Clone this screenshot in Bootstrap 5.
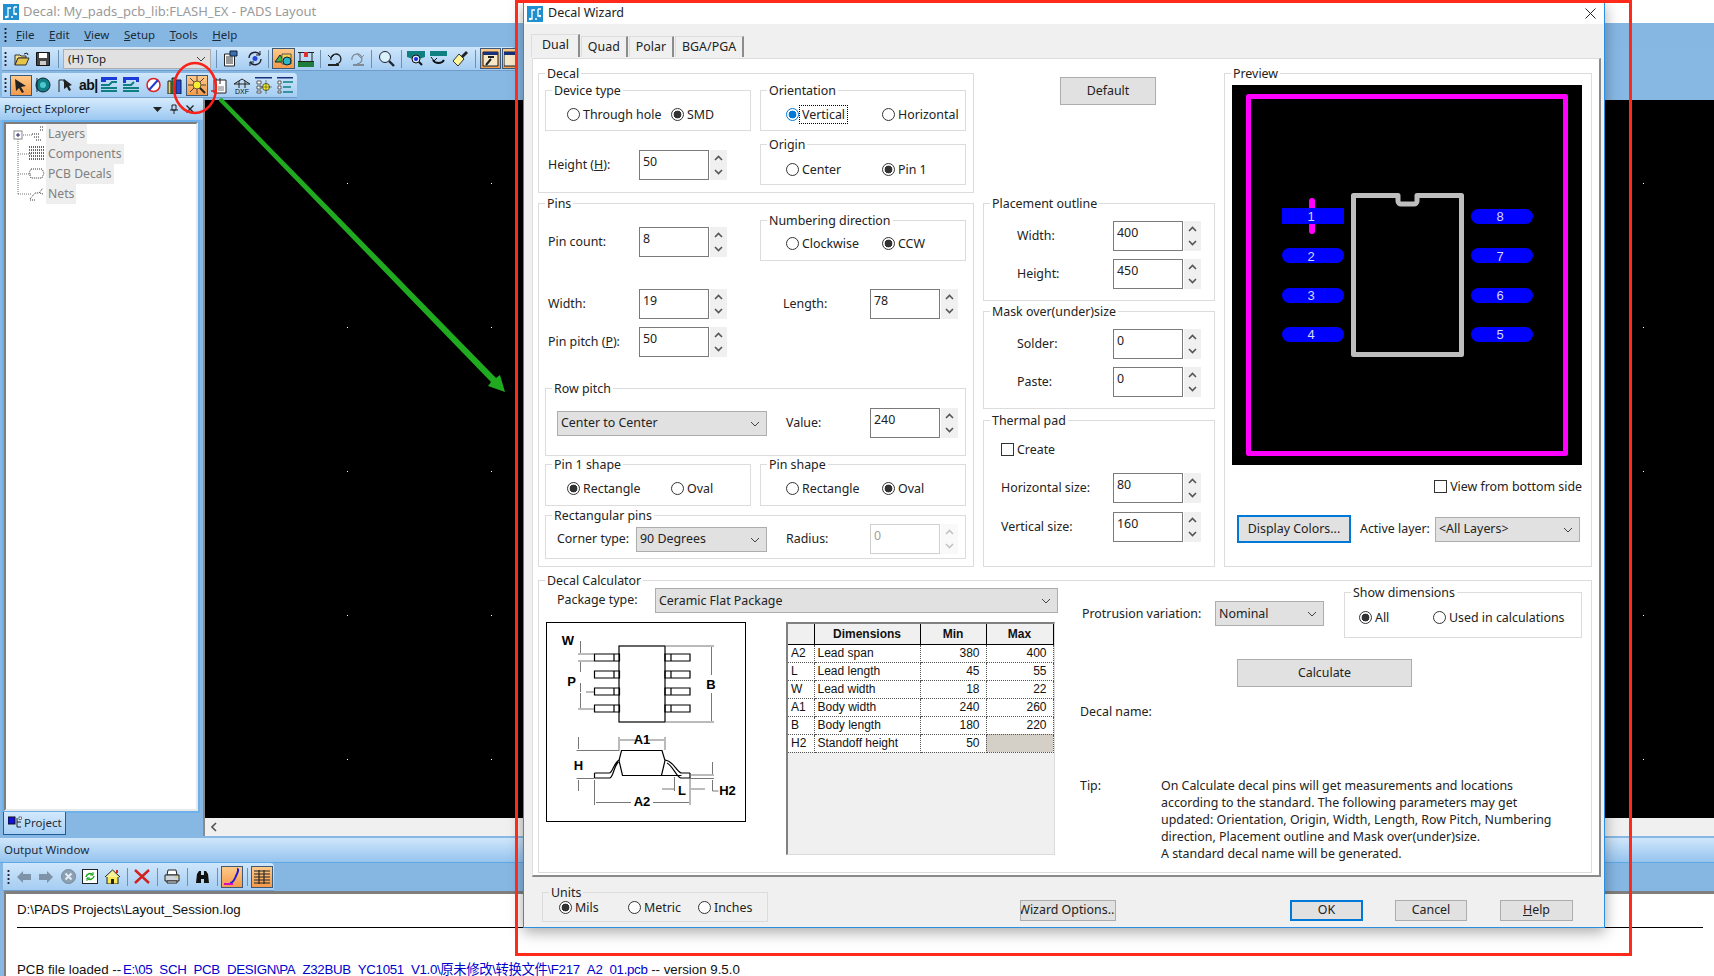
<!DOCTYPE html>
<html lang="en">
<head>
<meta charset="UTF-8">
<title>Decal Wizard - PADS Layout</title>
<link href="https://cdn.jsdelivr.net/npm/bootstrap@5.3.0/dist/css/bootstrap.min.css" rel="stylesheet">
<style>
body { margin: 0; background: #fff; }
.app { position: relative; width: 1714px; height: 976px; overflow: hidden; background: #87b8e4; font-family: "Noto Sans", sans-serif; font-size: 12.4px; color: #222; }

/* toolbar spacing, in the pixels of the original toolbars */
.gl-1 { margin-left: 1px; } .gl-2 { margin-left: 2px; } .gl-3 { margin-left: 3px; } .gl-4 { margin-left: 4px; }
.gl-5 { margin-left: 5px; } .gl-6 { margin-left: 6px; } .gl-7 { margin-left: 7px; } .gl-8 { margin-left: 8px; }

/* main window */
.win-title { height: 23px; background: #fff; color: #9a9a9a; font-size: 13px; padding-left: 3px; gap: 4px; }
.menu-strip { height: 24px; padding-left: 2px; background: #86b7e3; }
.menu-item { margin-right: 14.6px; font-size: 11.5px; color: #1a2a3a; }
.grip { width: 3px; height: 16px; margin: 0 3px 0 2px; flex: none; background-image: radial-gradient(circle, #223 0 1px, transparent 1.2px); background-size: 3px 4px; }
.strip { background: linear-gradient(#cfe6fb, #a5cdf2); border-bottom: 1px solid #6f9ccb; border-radius: 0 4px 0 0; }
.strip-top { height: 24px; margin-left: 2px; width: 513px; }
.strip-second { height: 25px; margin: 2px 0 0 2px; width: 295px; }
.ico { display: block; flex: none; }
.hot { display: flex; align-items: center; justify-content: center; flex: none; height: 21px; background: linear-gradient(#ffc98a, #f59a4a); border: 1px solid #3c5a78; }
.hot-23 { width: 23px; } .hot-22 { width: 22px; height: 22px; } .hot-21 { width: 21px; } .hot-14 { width: 14px; border-right: 0; }
.hot-arrow { width: 22px; }
.sep { width: 1px; height: 18px; background: #6f8faf; flex: none; }
.layer-pick { width: 148px; height: 20px; flex: none; background: #e1e1e1; border: 1px solid #adadad; padding: 0 4px; color: #222; font-size: 11.5px; }
.ab-mark { width: 16px; flex: none; font-family: "Liberation Sans", sans-serif; font-weight: 700; font-size: 14px; line-height: 1; letter-spacing: -.5px; white-space: nowrap; color: #111; }

.work { height: 738px; }
.side-pane { width: 203px; flex: none; }
.pane-head { height: 22px; padding: 0 9px 0 4px; background: linear-gradient(#d6ebfd, #9cc8f1); color: #1c2c3c; font-size: 11.5px; }
.tree-wrap { height: 693px; margin: 0 3px 0 2px; padding: 2px; background: #6db1ec; }
.tree-box { height: 100%; background: #fff; border: 2px solid; border-color: #7d7d7d #e8e8e8 #e8e8e8 #7d7d7d; position: relative; }
.tree-row { height: 20px; }
.tree-name { margin-left: 1px; padding: 0 2px; background: #eee; color: #808080; font-size: 12.2px; height: 20px; line-height: 20px; }
.tree-lines { position: absolute; left: 5px; top: 0; }
.tree-gap { width: 39px; flex: none; display: flex; justify-content: flex-end; }
.pane-tab { height: 23px; width: 63px; margin: -1px 0 0 3px; background: linear-gradient(#d3e9fd, #a8d0f5); border: 1px solid #1d5e99; border-top: 0; font-size: 11.5px; gap: 1px; padding-left: 4px; color: #1c2c3c; }
.canvas-col { flex: 1; border-left: 2px solid #8a8a8a; margin-top: 2px; }
.board { height: 718px; background: #000; }
.board svg { display: block; }
.hscroll { height: 18px; background: #f0f0f0; padding-left: 6px; }

.out-head { height: 24px; padding-left: 4px; margin-top: 2px; background: linear-gradient(#cfe6fb, #96c4ee); font-size: 11.5px; color: #1c2c3c; }
.out-tools-wrap { height: 29px; background: #86b7e3; padding-left: 3px; border-top: 1px solid #5ea8e6; }
.strip-out { width: 271px; height: 28px; padding-left: 2px; }
.out-log { height: 90px; margin-left: 4px; background: #fff; border: solid #7f7f7f; border-width: 3px 0 0 2px; padding: 6px 11px 0; font-family: "Liberation Sans", "Noto Sans CJK SC", sans-serif; font-size: 13.3px; color: #111; overflow: hidden; }
.out-rule { height: 1px; background: #000; margin: 7px 0 32px; }
.out-path { color: #00c; letter-spacing: -.33px; margin-left: -2px; }

/* dialog */
.dlg { position: absolute; left: 523px; top: 2px; width: 1082px; height: 926px; background: #f0f0f0; border: 1px solid #2a8fe0; box-shadow: 0 4px 14px rgba(0, 0, 0, .35); }
.dlg-title { height: 21px; background: #fff; padding: 0 8px 0 3px; gap: 5px; font-size: 12.5px; color: #222; }
.tabs-row { height: 34px; padding: 10px 0 0 7px; border: 0; gap: 1px; flex-wrap: nowrap; }
.wtab { height: 21px; margin-top: 2px; padding: 0 6px; background: #f0f0f0; border: solid; border-width: 1px 2px 0 1px; border-color: #ddd #8c8c8c #ddd #ddd; line-height: 19px; font-size: 12.4px; color: #222; }
.wtab-on { height: 23px; margin-top: 0; padding: 0 9px 0 10px; }
.tab-page { width: 1069px; height: 819px; margin-left: 8px; background: #fff; border: solid; border-width: 1px 2px 2px 1px; border-color: #ddd #8a8a8a #8a8a8a #ddd; padding: 14px 0 0 5px; }
.col-left { width: 436px; flex: none; }
.col-mid { width: 232px; flex: none; margin-left: 9px; }
.col-right { width: 368px; flex: none; margin-left: 9px; }

.grp { position: relative; border: 1px solid #dcdcdc; }
.grp-t { position: absolute; top: -8px; left: 6px; padding: 0 2px; background: #fff; line-height: 16px; white-space: nowrap; }

.g-decal { height: 120px; padding: 16px 0 0 6px; }
.g-pins { height: 364px; margin-top: 10px; padding: 16px 0 0 6px; }
.sub-col { width: 206px; flex: none; }
.sub-col + .sub-col { margin-left: 9px; }
.g-small { width: 206px; height: 41px; }
.g-origin { margin-top: 13px; padding-top: 18px; }
.g-shape { height: 42px; padding-top: 17px; }
.opts { padding-top: 17px; }
.opts-tight { padding-top: 16px; }
.opts-a { padding-left: 21px; }
.opts-b { padding-left: 25px; }
.opt-a { width: 104px; }
.opt-b { width: 96px; }
.form-check.opt { display: flex; align-items: center; align-self: flex-start; gap: 3px; padding: 0; margin-bottom: 0; min-height: 0; height: 13px; line-height: 13px; white-space: nowrap; }
.form-check.opt .form-check-label { line-height: 13px; }
.form-check .form-check-input.rad { float: none; flex: none; width: 13px; height: 13px; margin: 0; border: 1px solid #333; background-color: #fff; box-shadow: none; }
.form-check-input.rad:checked { background-color: #fff; background-image: radial-gradient(circle, #333 0 3.6px, transparent 4.2px); background-size: auto; border-color: #333; }
.form-check-input.rad.blue:checked { background-image: radial-gradient(circle, #0078d7 0 3.6px, transparent 4.2px); border-color: #0078d7; }
.form-check .form-check-input.box { float: none; flex: none; width: 13px; height: 13px; margin: 0; border: 1px solid #333; border-radius: 0; background-color: #fff; }
.focus-mark { outline: 1px dotted #000; outline-offset: 2px; }

.fld { display: flex; align-items: center; }
.num { display: flex; gap: 1px; flex: none; }
.num-val { width: 70px; height: 30px; padding: 2px 3px; border: 1px solid #7a7a7a; background: #fff; line-height: 18px; }
.num-spin { width: 17px; height: 30px; background: #f0f0f0; }
.num-off .num-val { border-color: #d0d0d0; color: #a0a0a0; }
.num-off .num-spin { opacity: .35; }
.fld-lbl { flex: none; white-space: nowrap; }
.lbl-pin { width: 91px; margin-left: 3px; }
.lbl-len { width: 87px; margin-left: 56px; }
.m-height { margin-top: 19px; }
.m-count { margin-top: 7px; }
.pins-top { height: 69px; }
.m-pitch { margin-top: 8px; }
.g-rowpitch { height: 68px; margin-top: 31px; width: 421px; padding: 2px 0 0 11px; }
.g-rectpins { height: 44px; margin-top: 9px; width: 421px; padding: 4px 0 0 11px; }
.pins-shape { margin-top: 8px; }
.pick { display: flex; align-items: center; justify-content: space-between; height: 25px; padding: 1px 6px 0 3px; background: #e1e1e1; border: 1px solid #adadad; white-space: nowrap; flex: none; }
.p-center { width: 210px; }
.p-val { width: 84px; margin-left: 19px; }
.lbl-corner { width: 79px; }
.p-deg { width: 131px; }

.wbtn.btn { display: flex; align-items: center; justify-content: center; padding: 0; background: #e1e1e1; border: 1px solid #adadad; border-radius: 0; font-size: 12.4px; color: #222; white-space: nowrap; overflow: hidden; flex: none; }
.wbtn-focus.btn { border: 2px solid #0078d7; }
.b-default { width: 96px; height: 28px; margin: 4px 0 0 77px; }
.g-place { height: 98px; margin-top: 98px; padding-top: 17px; }
.g-mask { height: 98px; margin-top: 10px; padding-top: 17px; }
.g-thermal { height: 147px; margin-top: 11px; padding-top: 22px; }
.lbl-mid { width: 96px; margin-left: 33px; }
.lbl-th { width: 112px; margin-left: 17px; }
.m-8 { margin-top: 8px; }
.form-check.opt.check-row { margin-left: 17px; }
.m-th1 { margin-top: 17px; }
.m-th2 { margin-top: 9px; }

.g-preview { height: 494px; padding: 11px 0 0 7px; }
.preview-view { width: 350px; height: 380px; background: #000; display: block; }
.form-check.opt.view-row { justify-content: flex-end; width: 350px; margin-top: 15px; }
.color-row { margin: 22px 0 0 5px; }
.b-colors { width: 114px; height: 28px; }
.lbl-active { margin-left: 9px; width: 75px; }
.p-layers { width: 145px; }

.g-calc { height: 293px; width: 1054px; margin-top: 13px; }
.calc-left { width: 534px; flex: none; padding: 7px 0 0 7px; }
.lbl-pkg { width: 98px; margin-left: 11px; }
.p-pkg { width: 403px; }
.calc-mid { margin-top: 9px; }
.pkg-box { width: 200px; height: 200px; border: 1px solid #000; flex: none; background: #fff; display: block; }
.dim-grid { width: 269px; height: 233px; margin-left: 40px; background: #f0f0f0; border: solid; border-width: 2px 1px 1px 2px; border-color: #808080 #dcdcdc #dcdcdc #808080; }
.dim-table { width: 265px; table-layout: fixed; border-collapse: collapse; margin: 0; font-family: "Liberation Sans", sans-serif; font-size: 12px; color: #111; }
.dim-table th { height: 20px; padding: 0; background: #f0f0f0; text-align: center; border-right: 1px solid #000; border-bottom: 1px solid #000; font-weight: 700; }
.dim-table td { height: 18px; padding: 0 3px; background: #fff; border-right: 1px dotted #555; border-bottom: 1px dotted #555; white-space: nowrap; line-height: 14px; }
.dim-table td.val { text-align: right; padding-right: 6px; }
.dim-table td.blank { background: #d4d0c8; }
.calc-right { padding-top: 11px; margin-left: 7px; }
.lbl-prot { width: 133px; margin-left: 2px; line-height: 25px; margin-top: 9px; }
.p-nom { width: 109px; margin-top: 9px; }
.g-show { width: 238px; height: 46px; margin-left: 20px; padding: 18px 0 0 14px; }
.opt-c { width: 74px; }
.b-calc { width: 175px; height: 28px; margin: 21px 0 0 157px; }
.decal-name { margin-top: 16px; line-height: 17px; }
.tip-row { margin-top: 57px; line-height: 17px; }
.tip-lbl { width: 81px; flex: none; }
.tip-text { width: 420px; margin: 0; }

.dlg-foot { padding-left: 18px; }
.g-units { width: 226px; height: 30px; margin-top: 15px; padding: 8px 0 0 16px; background: #f0f0f0; }
.g-units .grp-t { background: #f0f0f0; }
.opt-u1 { width: 69px; }
.opt-u2 { width: 70px; }
.b-wiz { width: 96px; height: 21px; margin: 23px 0 0 252px; }
.b-ok { width: 73px; height: 21px; margin: 23px 0 0 174px; }
.b-cancel { width: 72px; height: 21px; margin: 23px 0 0 32px; }
.b-help { width: 73px; height: 21px; margin: 23px 0 0 33px; }

/* annotations drawn over the screenshot */
.marks { position: absolute; left: 0; top: 0; pointer-events: none; }
.marks-top { position: absolute; left: 515px; top: 0; width: 1117px; height: 956px; border: 3px solid #ff2a1a; pointer-events: none; }
</style>
</head>
<body>

<svg width="0" height="0" class="position-absolute">
  <symbol id="spin" viewBox="0 0 17 30"><path d="M5 10l3.500-3.500 3.500 3.500M5 20l3.500 3.500 3.500-3.500" fill="none" stroke="#555" stroke-width="1.600"/></symbol>
  <symbol id="chev" viewBox="0 0 10 6"><path d="M1 1l4 4 4-4" fill="none" stroke="#444" stroke-width="1"/></symbol>
  <symbol id="app" viewBox="0 0 16 16"><rect width="16" height="16" fill="#1f8fd0"/><path d="M3 13h2V4h3M8 13h2M11 3v7h2M11 3h3" fill="none" stroke="#fff" stroke-width="1.300"/><circle cx="3" cy="13" r="1.200" fill="#fff"/><circle cx="13" cy="10" r="1.200" fill="#fff"/></symbol>
</svg>

<div class="app">
  <div class="win-title d-flex align-items-center">
    <svg class="ico" width="16" height="16"><use href="#app"/></svg>
    <span>Decal: My_pads_pcb_lib:FLASH_EX - PADS Layout</span>
  </div>
  <div class="menu-strip d-flex align-items-center">
    <span class="grip"></span>
    <span class="menu-item gl-6"><u>F</u>ile</span>
    <span class="menu-item"><u>E</u>dit</span>
    <span class="menu-item"><u>V</u>iew</span>
    <span class="menu-item"><u>S</u>etup</span>
    <span class="menu-item"><u>T</u>ools</span>
    <span class="menu-item"><u>H</u>elp</span>
  </div>

  <!-- standard toolbar -->
  <div class="strip strip-top d-flex align-items-center">
    <span class="grip"></span>
    <svg class="ico gl-4" width="16" height="14" viewBox="0 0 16 14"><path d="M1 3h5l1 1h5v2H4L1 13z" fill="#f5e08c" stroke="#333"/><path d="M1 13l3-7h11l-3 7z" fill="#e8c34a" stroke="#333"/><path d="M10 2l3-1 1 2" fill="none" stroke="#222"/></svg>
    <svg class="ico gl-6" width="14" height="14" viewBox="0 0 14 14"><path d="M.5.500h13v13H.5z" fill="#444" stroke="#111"/><path d="M3 1h8v5H3z" fill="#fff"/><path d="M4 9h6v4H4z" fill="#ccc"/></svg>
    <span class="sep gl-8"></span>
    <div class="layer-pick d-flex align-items-center justify-content-between gl-4"><span>(H) Top</span><svg width="10" height="6"><use href="#chev"/></svg></div>
    <span class="sep gl-5"></span>
    <svg class="ico gl-6" width="17" height="17" viewBox="0 0 17 17"><path d="M1.500 4h10v12h-10z" fill="#fff" stroke="#222"/><path d="M3 7h7M3 9h7M3 11h7M3 13h7" stroke="#333"/><path d="M7 1h7v5H7z" fill="#3b6fb5" stroke="#123"/></svg>
    <svg class="ico gl-6" width="18" height="17" viewBox="0 0 18 17"><path d="M3 8a6 6 0 0 1 11-3M15 9a6 6 0 0 1-11 3" fill="none" stroke="#223" stroke-width="1.400"/><path d="M14 1v4h-4M4 16v-4h4" fill="none" stroke="#223"/><circle cx="9" cy="8.500" r="2.500" fill="#2746d8"/></svg>
    <span class="sep gl-4"></span>
    <div class="hot hot-23 gl-3"><svg class="ico" width="20" height="16" viewBox="0 0 20 16"><path d="M1 11l5-7 5 7z" fill="#39b54a" stroke="#123"/><path d="M8 3h9v10H8z" fill="#f7d24a" stroke="#555"/><circle cx="13" cy="10" r="4" fill="#29b6c6" stroke="#123"/></svg></div>
    <svg class="ico gl-3" width="16" height="18" viewBox="0 0 16 18"><path d="M0 2.500h16M0 11.500h16" stroke="#222"/><path d="M0 12h16v5H0z" fill="#1f7d3c"/><rect x="6" y="2" width="4" height="5" fill="#e03030"/><path d="M2 2v10M14 2v10" stroke="#222"/></svg>
    <span class="sep gl-6"></span>
    <svg class="ico gl-6" width="16" height="15" viewBox="0 0 16 15"><path d="M13 9a5 5 0 1 0-5 4" fill="none" stroke="#222" stroke-width="1.300" transform="matrix(-1 0 0 1 17 0)"/><path d="M1 4l3 3 3-3" fill="none" stroke="#222"/><path d="M1 14h11" stroke="#222" stroke-width="2"/></svg>
    <svg class="ico gl-6" width="16" height="15" viewBox="0 0 16 15"><path d="M3 9a5 5 0 1 1 5 4" fill="none" stroke="#7f8b98" stroke-width="1.300"/><path d="M15 4l-3 3-3-3" fill="none" stroke="#7f8b98"/><path d="M4 14h11" stroke="#7f8b98" stroke-width="2"/></svg>
    <span class="sep gl-6"></span>
    <svg class="ico gl-6" width="17" height="17" viewBox="0 0 17 17"><circle cx="7" cy="7" r="5.500" fill="#d9f2fb" stroke="#223"/><path d="M11 11l5 5" stroke="#223" stroke-width="2.400"/></svg>
    <span class="sep gl-6"></span>
    <svg class="ico gl-5" width="18" height="16" viewBox="0 0 18 16"><path d="M0 0h18v6l-6 2H6L0 6z" fill="#0f7f80"/><circle cx="9" cy="8" r="4" fill="#d9e6ff" stroke="#111"/><circle cx="9" cy="8" r="2" fill="#1a2bd8"/><path d="M12 11l3 3" stroke="#111" stroke-width="2"/></svg>
    <svg class="ico gl-5" width="17" height="16" viewBox="0 0 17 16"><path d="M0 0h17v5H0z" fill="#0f7f80"/><path d="M3 9a6 5 0 0 0 11 0" fill="none" stroke="#111" stroke-width="1.800"/><path d="M1 6l3 4 3-3" fill="none" stroke="#111"/></svg>
    <svg class="ico gl-4" width="18" height="17" viewBox="0 0 18 17"><path d="M2 11l6-7 5 5-6 7z" fill="#fff59a" stroke="#333"/><path d="M10 6l5-5 2 2-5 5z" fill="#222"/></svg>
    <span class="sep gl-6"></span>
    <div class="hot hot-21 gl-4"><svg class="ico" width="17" height="16" viewBox="0 0 17 16"><path d="M1 1h15v14H1z" fill="#f7e9c8" stroke="#123"/><path d="M1 1h15v3H1z" fill="#17307a"/><path d="M4 14l5-6M6 6h6" stroke="#222" stroke-width="2"/></svg></div>
    <div class="hot hot-14 gl-1"><svg class="ico" width="12" height="16" viewBox="0 0 12 16"><path d="M0 1h12v14H0z" fill="#f7e9c8" stroke="#123"/><path d="M0 1h12v3H0z" fill="#17307a"/></svg></div>
  </div>

  <!-- decal toolbar -->
  <div class="strip strip-second d-flex align-items-center">
    <span class="grip"></span>
    <div class="hot hot-arrow"><svg class="ico" width="14" height="15" viewBox="0 0 14 15"><path d="M1 1l11 7-5 1 3 5-2 1-3-5-3 3z" fill="#222"/></svg></div>
    <svg class="ico gl-3" width="16" height="16" viewBox="0 0 16 16"><circle cx="8" cy="8" r="7" fill="#117f86" stroke="#123"/><circle cx="8" cy="8" r="3" fill="#4fc6cc"/><path d="M2 1v14" stroke="#123"/></svg>
    <svg class="ico gl-7" width="15" height="15" viewBox="0 0 15 15"><path d="M1 14V2h5v2" fill="none" stroke="#222"/><path d="M6 1l8 6-3 1 2 4-2 1-2-4-3 2z" fill="#222"/></svg>
    <span class="ab-mark gl-6">ab|</span>
    <svg class="ico gl-6" width="16" height="16" viewBox="0 0 16 16"><path d="M0 0h16v3H0z" fill="#1c3cd8"/><path d="M0 3h5v2H0z" fill="#1c3cd8"/><path d="M0 8h8l3-3h5M0 11h16M0 14h16" stroke="#0f7f80" stroke-width="2" fill="none"/></svg>
    <svg class="ico gl-6" width="16" height="16" viewBox="0 0 16 16"><path d="M0 0h16v5h-3V3H3v3H0z" fill="#1c3cd8"/><path d="M0 8h8l3-3M0 11h16M0 14h16" stroke="#0f7f80" stroke-width="2" fill="none"/></svg>
    <svg class="ico gl-7" width="15" height="16" viewBox="0 0 15 16"><circle cx="7.500" cy="8" r="6.500" fill="#fff" stroke="#d22" stroke-width="1.500"/><path d="M3 13L12 3" stroke="#1c3cd8" stroke-width="2"/></svg>
    <svg class="ico gl-6" width="16" height="17" viewBox="0 0 16 17"><path d="M1 4h3v13H1z" fill="#f6d24a" stroke="#123"/><path d="M5 1h3v16H5z" fill="#2fa84f" stroke="#123"/><path d="M9 3h5v14H9z" fill="#2746d8" stroke="#123"/></svg>
    <div class="hot hot-arrow gl-3"><svg class="ico" width="18" height="18" viewBox="0 0 18 18"><path d="M9 0v18M0 9h18M2 2l14 14M16 2L2 16" stroke="#222" stroke-width=".8"/><circle cx="9" cy="9" r="4" fill="#f6f02a" stroke="#654"/><path d="M12 12l5 5" stroke="#222" stroke-width="2"/></svg></div>
    <svg class="ico gl-3" width="16" height="17" viewBox="0 0 16 17"><path d="M3 3h12v13H3z" fill="#fff" stroke="#222"/><path d="M5 1v6M9 1v6" stroke="#222"/><path d="M0 14h5" stroke="#e02020" stroke-width="1.500"/><path d="M7 9h6v5H7z" fill="#bbb"/></svg>
    <svg class="ico gl-6" width="18" height="17" viewBox="0 0 18 17"><path d="M1 7l8-5 8 5M6 4v7M12 4v7M1 7h16" fill="none" stroke="#222"/><text x="9" y="16.500" font-family="Liberation Sans" font-size="7" text-anchor="middle" fill="#111">DXF</text></svg>
    <svg class="ico gl-4" width="17" height="17" viewBox="0 0 17 17"><path d="M0 .5h17" stroke="#17307a" stroke-width="2"/><path d="M2 4h4v3H2zM2 9h4v3H2zM2 14h4v2H2z" fill="#fff" stroke="#222" stroke-width=".7"/><circle cx="11" cy="10" r="3.500" fill="#f6f02a" stroke="#222" stroke-width=".7"/><path d="M11 3v14M4 10h13" stroke="#222" stroke-width=".5"/></svg>
    <svg class="ico gl-5" width="16" height="17" viewBox="0 0 16 17"><path d="M0 .5h16" stroke="#17307a" stroke-width="2"/><path d="M1 4h3v3H1zM1 9h3v3H1zM1 14h3v2H1z" fill="#fff" stroke="#222" stroke-width=".7"/><path d="M6 5h10M6 10h8M6 15h10" stroke="#0f7f80" stroke-width="1.500"/></svg>
  </div>

  <div class="work d-flex">
    <div class="side-pane">
      <div class="pane-head d-flex align-items-center">
        <span class="flex-grow-1">Project Explorer</span>
        <svg class="ico me-2" width="9" height="5"><path d="M0 0h9L4.500 5z" fill="#222"/></svg>
        <svg class="ico me-2" width="8" height="10" viewBox="0 0 8 10"><path d="M2 1h4v5H2zM0 6h8M4 6v4" fill="none" stroke="#222"/></svg>
        <svg class="ico" width="8" height="8" viewBox="0 0 8 8"><path d="M.5.500l7 7M7.500.500l-7 7" stroke="#222" stroke-width="1.300"/></svg>
      </div>
      <div class="tree-wrap">
        <div class="tree-box">
          <svg class="tree-lines" width="36" height="80"><path d="M7 11V70M7 70h14M7 30h14M7 50h14M12 11h9" stroke="#777" stroke-dasharray="1 1" fill="none"/><rect x="3" y="7" width="8" height="8" fill="#fff" stroke="#888"/><path d="M5 11h4M7 9v4" stroke="#226"/></svg>
          <div class="tree-row d-flex"><span class="tree-gap"><svg width="15" height="18" viewBox="0 0 15 18"><path d="M2 10h8M4 13h6M10 3h4M6 16h5M10 6h3" stroke="#222" stroke-dasharray="1 1"/></svg></span><span class="tree-name">Layers</span></div>
          <div class="tree-row d-flex"><span class="tree-gap"><svg width="17" height="18" viewBox="0 0 17 18"><path d="M1 3h15M1 6h15M1 9h15M1 12h15M1 15h15" stroke="#333" stroke-width="1.500" stroke-dasharray="1 1"/></svg></span><span class="tree-name">Components</span></div>
          <div class="tree-row d-flex"><span class="tree-gap"><svg width="17" height="18" viewBox="0 0 17 18"><path d="M3 5h11l2 4-2 5H3L1 9z" fill="none" stroke="#333" stroke-dasharray="1 1"/></svg></span><span class="tree-name">PCB Decals</span></div>
          <div class="tree-row d-flex"><span class="tree-gap"><svg width="17" height="18" viewBox="0 0 17 18"><path d="M2 15l5-6h4l4-5M2 16h6M12 9l3 1" fill="none" stroke="#333" stroke-dasharray="1 1"/></svg></span><span class="tree-name">Nets</span></div>
        </div>
      </div>
      <div class="pane-tab d-flex align-items-center">
        <svg class="ico" width="15" height="15" viewBox="0 0 15 15"><rect x="0" y="1" width="7" height="7" fill="#1010e0" stroke="#111"/><path d="M9 2v9h4M9 6h4" fill="none" stroke="#222"/><rect x="11" y="1" width="2.500" height="2.500" fill="#fff" stroke="#222" stroke-width=".6"/></svg>
        <span>Project</span>
      </div>
    </div>
    <div class="canvas-col">
      <div class="board">
        <svg width="1507" height="718">
          <defs><pattern id="griddots" x="0" y="0" width="144" height="144" patternUnits="userSpaceOnUse"><rect x="142" y="83" width="1" height="1" fill="#fff"/></pattern></defs>
          <rect width="1507" height="718" fill="url(#griddots)"/>
        </svg>
      </div>
      <div class="hscroll d-flex align-items-center"><svg width="6" height="10" viewBox="0 0 6 10"><path d="M5 1L1 5l4 4" fill="none" stroke="#555" stroke-width="1.600"/></svg></div>
    </div>
  </div>

  <div class="out-head d-flex align-items-center">Output Window</div>
  <div class="out-tools-wrap">
    <div class="strip strip-out d-flex align-items-center">
      <span class="grip"></span>
      <svg class="ico gl-4" width="14" height="12" viewBox="0 0 14 12"><path d="M0 6l6-6v3h8v6H6v3z" fill="#7f93a8"/></svg>
      <svg class="ico gl-8" width="14" height="12" viewBox="0 0 14 12"><path d="M14 6L8 0v3H0v6h8v3z" fill="#7f93a8"/></svg>
      <svg class="ico gl-8" width="15" height="15" viewBox="0 0 15 15"><circle cx="7.500" cy="7.500" r="7" fill="#8ca0b4" stroke="#789"/><path d="M4.500 4.500l6 6M10.500 4.500l-6 6" stroke="#e6edf3" stroke-width="2"/></svg>
      <svg class="ico gl-6" width="16" height="15" viewBox="0 0 16 15"><rect x=".5" y=".5" width="15" height="14" fill="#fff" stroke="#222"/><path d="M4 8a4 4 0 0 1 7-2M12 7a4 4 0 0 1-7 2" fill="none" stroke="#1da51d" stroke-width="1.500"/><path d="M11 3v3H8M5 12V9h3" fill="none" stroke="#1da51d"/></svg>
      <svg class="ico gl-7" width="15" height="15" viewBox="0 0 15 15"><path d="M2 7h11v8H2z" fill="#f7e95a" stroke="#222"/><path d="M0 8l7.500-7L15 8" fill="#f7f19a" stroke="#222"/><path d="M6 10h3v5H6z" fill="#222"/><path d="M11 1h2v3h-2z" fill="#d22"/></svg>
      <span class="sep gl-7"></span>
      <svg class="ico gl-6" width="16" height="15" viewBox="0 0 16 15"><path d="M1 1l14 13M15 1L1 14" stroke="#d02020" stroke-width="2.400"/></svg>
      <span class="sep gl-7"></span>
      <svg class="ico gl-6" width="16" height="15" viewBox="0 0 16 15"><path d="M4 1h8l1 5H3z" fill="#fff" stroke="#222"/><path d="M1 6h14v6H1z" fill="#cfd5db" stroke="#222"/><path d="M3 12h10v2H3z" fill="#fff" stroke="#222"/><path d="M11 8h2" stroke="#e8c020"/></svg>
      <span class="sep gl-7"></span>
      <svg class="ico gl-7" width="15" height="14" viewBox="0 0 15 14"><path d="M1 13l1-9 2-3h2v12zM14 13l-1-9-2-3H9v12zM6 5h3v4H6z" fill="#111"/></svg>
      <span class="sep gl-7"></span>
      <div class="hot hot-22 gl-3"><svg class="ico" width="18" height="18" viewBox="0 0 18 18"><path d="M14 1c2 0 1 3-1 7-2 5-4 7-6 7" fill="none" stroke="#1c1cd8" stroke-width="2"/><path d="M1 16h9" stroke="#d010c0" stroke-width="2"/></svg></div>
      <span class="sep gl-4"></span>
      <div class="hot hot-22 gl-3"><svg class="ico" width="16" height="14" viewBox="0 0 16 14"><path d="M0 1h16M0 4h16M0 7h16M0 10h16M0 13h16M5 0v14M10 0v14" stroke="#222" stroke-width="1.100"/></svg></div>
    </div>
  </div>
  <div class="out-log">
    <div>D:\PADS Projects\Layout_Session.log</div>
    <div class="out-rule"></div>
    <div class="text-nowrap">PCB file loaded -- <span class="out-path">E:\05_SCH_PCB_DESIGN\PA_Z32BUB_YC1051_V1.0\原未修改\转换文件\F217_A2_01.pcb</span> -- version 9.5.0</div>
  </div>

  <!-- annotations on the main window -->
  <svg class="marks" width="515" height="420">
    <path d="M219 99L222 98L496 378L500 375L505 392L488 386L491 382L219 101z" fill="#1faa1f"/>
    <ellipse cx="195" cy="88" rx="21" ry="25" fill="none" stroke="#f8221a" stroke-width="2.500"/>
  </svg>

  <!-- Decal Wizard dialog -->
  <div class="dlg">
    <div class="dlg-title d-flex align-items-center">
      <svg class="ico" width="16" height="16"><use href="#app"/></svg>
      <span class="flex-grow-1">Decal Wizard</span>
      <svg class="ico" width="11" height="11" viewBox="0 0 11 11"><path d="M.5.500l10 10M10.500.500l-10 10" stroke="#222"/></svg>
    </div>
    <ul class="nav tabs-row">
      <li class="wtab wtab-on">Dual</li>
      <li class="wtab">Quad</li>
      <li class="wtab">Polar</li>
      <li class="wtab">BGA/PGA</li>
    </ul>
    <div class="tab-page">
      <div class="d-flex">
        <div class="col-left">
          <div class="grp g-decal d-flex">
            <span class="grp-t">Decal</span>
            <div class="sub-col">
              <div class="grp g-small opts opts-a d-flex">
                <span class="grp-t">Device type</span>
                <div class="form-check opt opt-a"><input class="form-check-input rad" type="radio" name="dev"><label class="form-check-label">Through hole</label></div>
                <div class="form-check opt"><input class="form-check-input rad" type="radio" name="dev" checked><label class="form-check-label">SMD</label></div>
              </div>
              <div class="fld m-height">
                <span class="fld-lbl lbl-pin">Height (<u>H</u>):</span>
                <div class="num"><div class="num-val">50</div><svg class="num-spin"><use href="#spin"/></svg></div>
              </div>
            </div>
            <div class="sub-col">
              <div class="grp g-small opts opts-b d-flex">
                <span class="grp-t">Orientation</span>
                <div class="form-check opt opt-b"><input class="form-check-input rad blue" type="radio" name="ori" checked><label class="form-check-label focus-mark">Vertical</label></div>
                <div class="form-check opt"><input class="form-check-input rad" type="radio" name="ori"><label class="form-check-label">Horizontal</label></div>
              </div>
              <div class="grp g-small g-origin opts-b d-flex">
                <span class="grp-t">Origin</span>
                <div class="form-check opt opt-b"><input class="form-check-input rad" type="radio" name="org"><label class="form-check-label">Center</label></div>
                <div class="form-check opt"><input class="form-check-input rad" type="radio" name="org" checked><label class="form-check-label">Pin 1</label></div>
              </div>
            </div>
          </div>

          <div class="grp g-pins">
            <span class="grp-t">Pins</span>
            <div class="d-flex pins-top">
              <div class="sub-col">
                <div class="fld m-count">
                  <span class="fld-lbl lbl-pin">Pin count:</span>
                  <div class="num"><div class="num-val">8</div><svg class="num-spin"><use href="#spin"/></svg></div>
                </div>
              </div>
              <div class="sub-col">
                <div class="grp g-small opts-tight opts-b d-flex">
                  <span class="grp-t">Numbering direction</span>
                  <div class="form-check opt opt-b"><input class="form-check-input rad" type="radio" name="num"><label class="form-check-label">Clockwise</label></div>
                  <div class="form-check opt"><input class="form-check-input rad" type="radio" name="num" checked><label class="form-check-label">CCW</label></div>
                </div>
              </div>
            </div>
            <div class="fld">
              <span class="fld-lbl lbl-pin">Width:</span>
              <div class="num"><div class="num-val">19</div><svg class="num-spin"><use href="#spin"/></svg></div>
              <span class="fld-lbl lbl-len">Length:</span>
              <div class="num"><div class="num-val">78</div><svg class="num-spin"><use href="#spin"/></svg></div>
            </div>
            <div class="fld m-pitch">
              <span class="fld-lbl lbl-pin">Pin pitch (<u>P</u>):</span>
              <div class="num"><div class="num-val">50</div><svg class="num-spin"><use href="#spin"/></svg></div>
            </div>
            <div class="grp g-rowpitch fld">
              <span class="grp-t">Row pitch</span>
              <div class="pick p-center"><span>Center to Center</span><svg width="10" height="6"><use href="#chev"/></svg></div>
              <span class="fld-lbl p-val">Value:</span>
              <div class="num"><div class="num-val">240</div><svg class="num-spin"><use href="#spin"/></svg></div>
            </div>
            <div class="d-flex pins-shape">
              <div class="sub-col">
                <div class="grp g-small g-shape opts-a d-flex">
                  <span class="grp-t">Pin 1 shape</span>
                  <div class="form-check opt opt-a"><input class="form-check-input rad" type="radio" name="p1" checked><label class="form-check-label">Rectangle</label></div>
                  <div class="form-check opt"><input class="form-check-input rad" type="radio" name="p1"><label class="form-check-label">Oval</label></div>
                </div>
              </div>
              <div class="sub-col">
                <div class="grp g-small g-shape opts-b d-flex">
                  <span class="grp-t">Pin shape</span>
                  <div class="form-check opt opt-b"><input class="form-check-input rad" type="radio" name="ps"><label class="form-check-label">Rectangle</label></div>
                  <div class="form-check opt"><input class="form-check-input rad" type="radio" name="ps" checked><label class="form-check-label">Oval</label></div>
                </div>
              </div>
            </div>
            <div class="grp g-rectpins fld">
              <span class="grp-t">Rectangular pins</span>
              <span class="fld-lbl lbl-corner">Corner type:</span>
              <div class="pick p-deg"><span>90 Degrees</span><svg width="10" height="6"><use href="#chev"/></svg></div>
              <span class="fld-lbl p-val">Radius:</span>
              <div class="num num-off"><div class="num-val">0</div><svg class="num-spin"><use href="#spin"/></svg></div>
            </div>
          </div>
        </div>

        <div class="col-mid">
          <button class="btn wbtn b-default" type="button">Default</button>
          <div class="grp g-place">
            <span class="grp-t">Placement outline</span>
            <div class="fld"><span class="fld-lbl lbl-mid">Width:</span><div class="num"><div class="num-val">400</div><svg class="num-spin"><use href="#spin"/></svg></div></div>
            <div class="fld m-8"><span class="fld-lbl lbl-mid">Height:</span><div class="num"><div class="num-val">450</div><svg class="num-spin"><use href="#spin"/></svg></div></div>
          </div>
          <div class="grp g-mask">
            <span class="grp-t">Mask over(under)size</span>
            <div class="fld"><span class="fld-lbl lbl-mid">Solder:</span><div class="num"><div class="num-val">0</div><svg class="num-spin"><use href="#spin"/></svg></div></div>
            <div class="fld m-8"><span class="fld-lbl lbl-mid">Paste:</span><div class="num"><div class="num-val">0</div><svg class="num-spin"><use href="#spin"/></svg></div></div>
          </div>
          <div class="grp g-thermal">
            <span class="grp-t">Thermal pad</span>
            <div class="form-check opt check-row"><input class="form-check-input box" type="checkbox"><label class="form-check-label">Create</label></div>
            <div class="fld m-th1"><span class="fld-lbl lbl-th">Horizontal size:</span><div class="num"><div class="num-val">80</div><svg class="num-spin"><use href="#spin"/></svg></div></div>
            <div class="fld m-th2"><span class="fld-lbl lbl-th">Vertical size:</span><div class="num"><div class="num-val">160</div><svg class="num-spin"><use href="#spin"/></svg></div></div>
          </div>
        </div>

        <div class="col-right">
          <div class="grp g-preview">
            <span class="grp-t">Preview</span>
            <svg class="preview-view" viewBox="0 0 350 380" font-family="Liberation Sans" font-size="13" text-anchor="middle" fill="#d5d8ff">
              <rect x="16.500" y="11.500" width="317" height="357" fill="none" stroke="#f0f" stroke-width="5" stroke-linejoin="round"/>
              <path d="M121.500 110.500h44.500v5.500a3 3 0 0 0 3 3h13a3 3 0 0 0 3-3v-5.500h44.500v159h-108z" fill="none" stroke="#bebebe" stroke-width="5" stroke-linejoin="round"/>
              <rect x="77" y="113" width="6" height="36" rx="3" fill="#f0f"/>
              <rect x="50" y="123" width="62" height="16" fill="#00f"/>
              <rect x="50" y="163" width="62" height="15" rx="7.500" fill="#00f"/>
              <rect x="50" y="203" width="62" height="15" rx="7.500" fill="#00f"/>
              <rect x="50" y="242" width="62" height="15" rx="7.500" fill="#00f"/>
              <rect x="239" y="124" width="62" height="15" rx="7.500" fill="#00f"/>
              <rect x="239" y="163" width="62" height="15" rx="7.500" fill="#00f"/>
              <rect x="239" y="203" width="62" height="15" rx="7.500" fill="#00f"/>
              <rect x="239" y="242" width="62" height="15" rx="7.500" fill="#00f"/>
              <text x="79" y="136">1</text><text x="79" y="176">2</text><text x="79" y="215">3</text><text x="79" y="254">4</text>
              <text x="268" y="136">8</text><text x="268" y="176">7</text><text x="268" y="215">6</text><text x="268" y="254">5</text>
            </svg>
            <div class="form-check opt view-row"><input class="form-check-input box" type="checkbox"><label class="form-check-label">View from bottom side</label></div>
            <div class="fld color-row">
              <button class="btn wbtn wbtn-focus b-colors" type="button">Display Colors...</button>
              <span class="fld-lbl lbl-active">Active layer:</span>
              <div class="pick p-layers"><span>&lt;All Layers&gt;</span><svg width="10" height="6"><use href="#chev"/></svg></div>
            </div>
          </div>
        </div>
      </div>

      <div class="grp g-calc d-flex">
        <span class="grp-t">Decal Calculator</span>
        <div class="calc-left">
          <div class="fld">
            <span class="fld-lbl lbl-pkg">Package type:</span>
            <div class="pick p-pkg"><span>Ceramic Flat Package</span><svg width="10" height="6"><use href="#chev"/></svg></div>
          </div>
          <div class="d-flex calc-mid">
            <svg class="pkg-box" viewBox="1 1 198 198" font-family="Liberation Sans" font-weight="700" font-size="13" text-anchor="middle" fill="#000">
              <g fill="none" stroke="#000" stroke-width="1.200">
                <rect x="73" y="24" width="46" height="76"/>
                <path d="M48.500 32h25v7h-25zM48.500 49h25v7h-25zM48.500 66h25v7h-25zM48.500 83h25v7h-25zM68 32v7M68 49v7M68 66v7M68 83v7"/>
                <path d="M119 32h25v7h-25zM119 49h25v7h-25zM119 66h25v7h-25zM119 83h25v7h-25zM125 32v7M125 49v7M125 66v7M125 83v7"/>
                <path d="M75.500 128.500h40.500l3 10-3.500 15H76.500l-3.500-15z"/>
                <path d="M48.500 151h15c3 0 5-12 10-13M48.500 156h15c4 0 4-12 9-16M144 151h-8c-5 0-8-12-17-13M144 156h-9c-4 0-8-12-14-15M115.500 153.500h20M144 151v5M48.500 151v5"/>
              </g>
              <g fill="none" stroke="#777" stroke-width="1">
                <path d="M32 32h16M32 39h16M34.500 19v12M34.500 40v10M40 70h8M32 87h16M34.500 61v9M34.500 71v15"/>
                <path d="M120 24h48M120 100h48M165.500 25v28M165.500 71v28"/>
                <path d="M73 115v13M119 115v13M74 118h18M101 118h17"/>
                <path d="M30.500 128.500h43M30.500 156.500h18M32.500 115v12M32.500 158v11"/>
                <path d="M144 153h24M144 156.500h24M166.500 140v12M166.500 158v11h6"/>
                <path d="M128.500 155v14M144 156v27M116 167h12M145 167h14"/>
                <path d="M48.500 158v25M50 180.500h35M107 180.500h36"/>
              </g>
              <text x="22" y="23">W</text><text x="25.500" y="64">P</text><text x="165" y="67">B</text>
              <text x="96" y="122">A1</text><text x="32.500" y="148">H</text><text x="136" y="173">L</text>
              <text x="181.500" y="173">H2</text><text x="96" y="184">A2</text>
            </svg>
            <div class="dim-grid">
              <table class="dim-table">
                <colgroup><col width="26"><col width="106"><col width="66"><col width="67"></colgroup>
                <thead><tr><th></th><th>Dimensions</th><th>Min</th><th>Max</th></tr></thead>
                <tbody>
                  <tr><td>A2</td><td>Lead span</td><td class="val">380</td><td class="val">400</td></tr>
                  <tr><td>L</td><td>Lead length</td><td class="val">45</td><td class="val">55</td></tr>
                  <tr><td>W</td><td>Lead width</td><td class="val">18</td><td class="val">22</td></tr>
                  <tr><td>A1</td><td>Body width</td><td class="val">240</td><td class="val">260</td></tr>
                  <tr><td>B</td><td>Body length</td><td class="val">180</td><td class="val">220</td></tr>
                  <tr><td>H2</td><td>Standoff height</td><td class="val">50</td><td class="blank"></td></tr>
                </tbody>
              </table>
            </div>
          </div>
        </div>
        <div class="calc-right">
          <div class="d-flex">
            <span class="fld-lbl lbl-prot">Protrusion variation:</span>
            <div class="pick p-nom"><span>Nominal</span><svg width="10" height="6"><use href="#chev"/></svg></div>
            <div class="grp g-show d-flex">
              <span class="grp-t">Show dimensions</span>
              <div class="form-check opt opt-c"><input class="form-check-input rad" type="radio" name="show" checked><label class="form-check-label">All</label></div>
              <div class="form-check opt"><input class="form-check-input rad" type="radio" name="show"><label class="form-check-label">Used in calculations</label></div>
            </div>
          </div>
          <button class="btn wbtn b-calc" type="button">Calculate</button>
          <div class="decal-name">Decal name:</div>
          <div class="d-flex tip-row">
            <span class="tip-lbl">Tip:</span>
            <p class="tip-text">On Calculate decal pins will get measurements and locations<br>according to the standard. The following parameters may get<br>updated: Orientation, Origin, Width, Length, Row Pitch, Numbering<br>direction, Placement outline and Mask over(under)size.<br>A standard decal name will be generated.</p>
          </div>
        </div>
      </div>
    </div>

    <div class="dlg-foot d-flex">
      <div class="grp g-units d-flex">
        <span class="grp-t">Units</span>
        <div class="form-check opt opt-u1"><input class="form-check-input rad" type="radio" name="unit" checked><label class="form-check-label">Mils</label></div>
        <div class="form-check opt opt-u2"><input class="form-check-input rad" type="radio" name="unit"><label class="form-check-label">Metric</label></div>
        <div class="form-check opt"><input class="form-check-input rad" type="radio" name="unit"><label class="form-check-label">Inches</label></div>
      </div>
      <button class="btn wbtn b-wiz" type="button">Wizard Options...</button>
      <button class="btn wbtn wbtn-focus b-ok" type="button">OK</button>
      <button class="btn wbtn b-cancel" type="button">Cancel</button>
      <button class="btn wbtn b-help" type="button"><span><u>H</u>elp</span></button>
    </div>
  </div>

  <div class="marks-top"></div>
</div>

<script src="https://cdn.jsdelivr.net/npm/bootstrap@5.3.0/dist/js/bootstrap.bundle.min.js"></script>
</body>
</html>
